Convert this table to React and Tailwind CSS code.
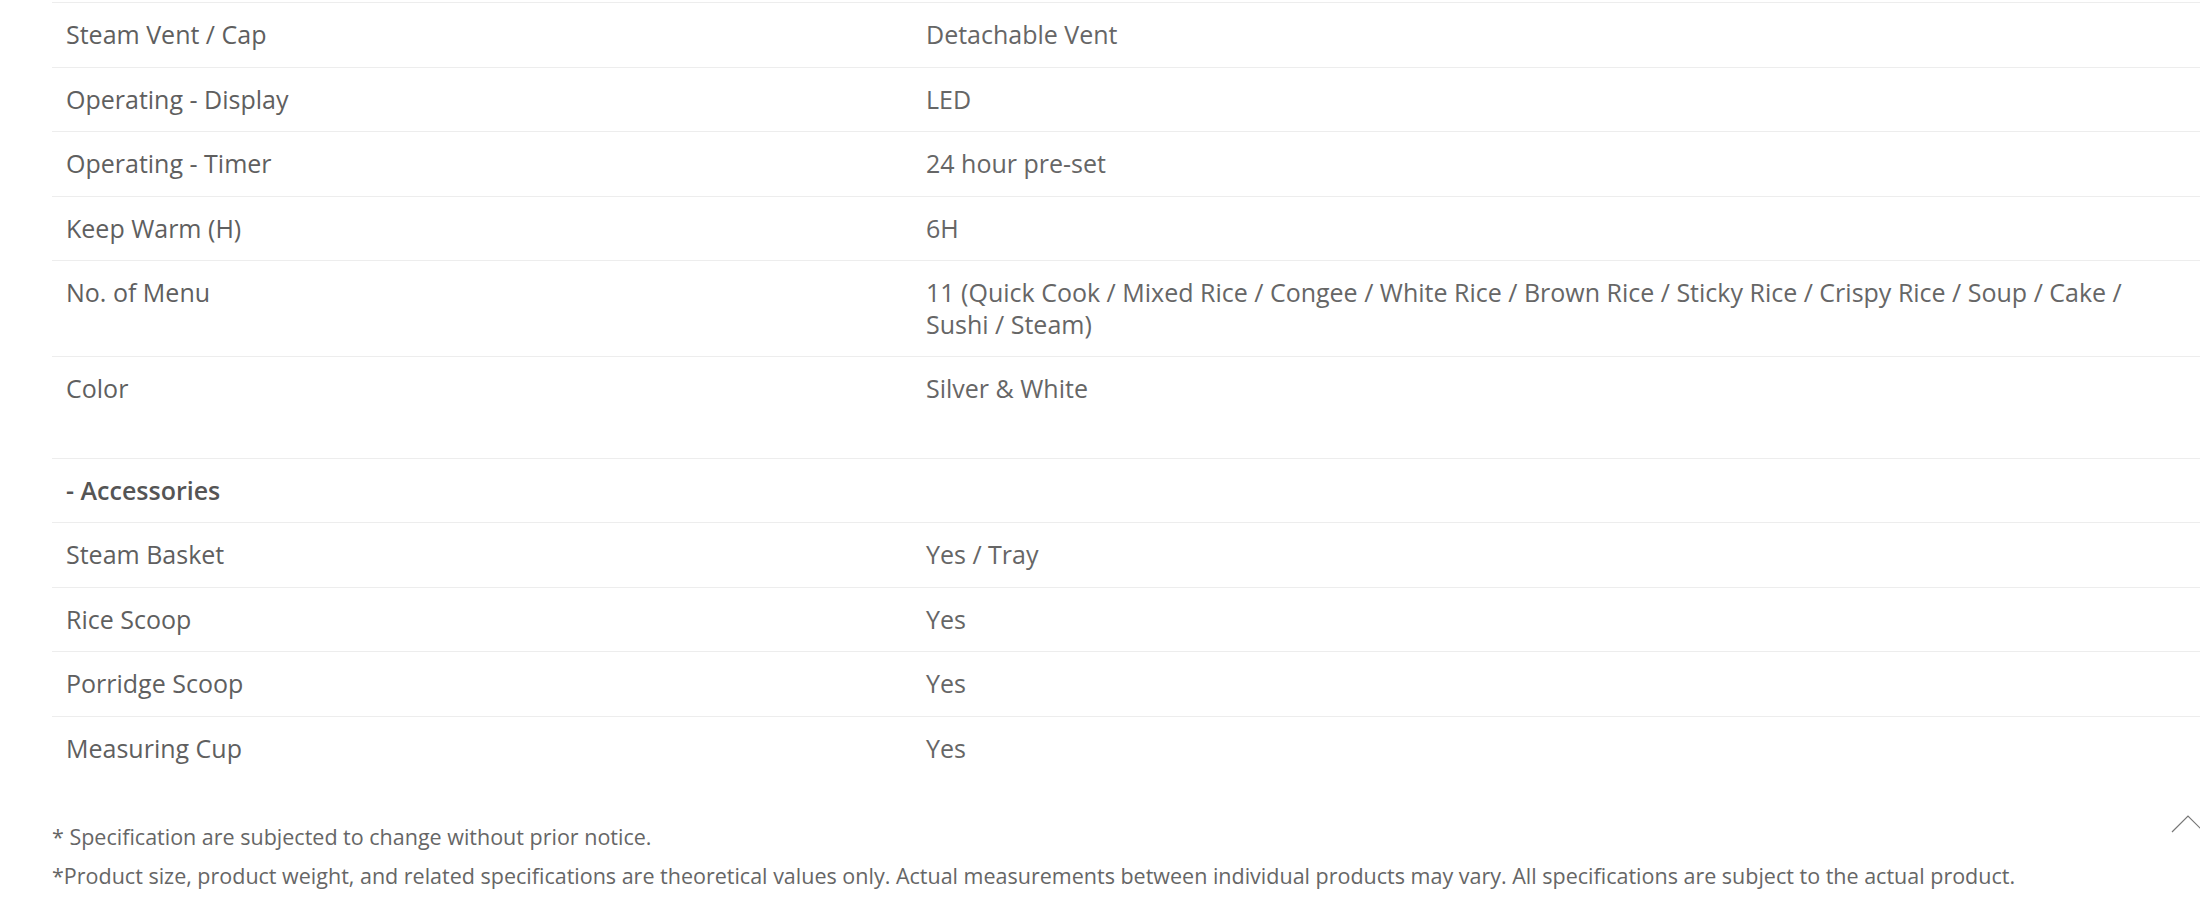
const specs = [
  { label: 'Steam Vent / Cap', value: 'Detachable Vent' },
  { label: 'Operating - Display', value: 'LED' },
  { label: 'Operating - Timer', value: '24 hour pre-set' },
  { label: 'Keep Warm (H)', value: '6H' },
  {
    label: 'No. of Menu',
    value: [
      '11 (Quick Cook / Mixed Rice / Congee / White Rice / Brown Rice / Sticky Rice / Crispy Rice / Soup / Cake /',
      'Sushi / Steam)',
    ],
  },
  { label: 'Color', value: 'Silver & White', spacer: true },
]

const accessories = [
  { label: 'Steam Basket', value: 'Yes / Tray' },
  { label: 'Rice Scoop', value: 'Yes' },
  { label: 'Porridge Scoop', value: 'Yes' },
  { label: 'Measuring Cup', value: 'Yes' },
]

function SpecRow({ label, value, spacer }) {
  return (
    <div className={`flex border-t border-[#ededed] pt-4 ${spacer ? 'pb-[53px]' : 'pb-4'}`}>
      <div className="w-[860px] shrink-0 pl-[14px] text-[#5f5f5f]">{label}</div>
      <div className="flex-1 pl-[14px] text-[#666]">
        {Array.isArray(value)
          ? value.map((line) => (
              <div key={line} className="whitespace-nowrap">
                {line}
              </div>
            ))
          : value}
      </div>
    </div>
  )
}

export default function App() {
  return (
    <div className="relative h-[918px] w-[2200px] overflow-hidden bg-white font-['Open_Sans',sans-serif]">
      <div className="pl-[52px] pt-[2px] text-[25px] leading-[31.5px]">
        {specs.map((row) => (
          <SpecRow key={row.label} {...row} />
        ))}
        <div className="flex border-t border-[#ededed] py-4">
          <div className="pl-[14px] font-semibold text-[#555]">- Accessories</div>
        </div>
        {accessories.map((row) => (
          <SpecRow key={row.label} {...row} />
        ))}
      </div>

      <div className="mt-[37px] pl-[52px] text-[21.5px] leading-[39px] text-[#666]">
        <p className="whitespace-nowrap">* Specification are subjected to change without prior notice.</p>
        <p className="whitespace-nowrap">
          *Product size, product weight, and related specifications are theoretical values only. Actual
          measurements between individual products may vary. All specifications are subject to the actual product.
        </p>
      </div>

      <button className="absolute left-[2168px] top-[810px] h-[30px] w-[40px]">
        <svg width="40" height="30" viewBox="0 0 40 30" fill="none">
          <path d="M4 22 L20 6 L36 22" stroke="#777" strokeWidth="1.2" />
        </svg>
      </button>
    </div>
  )
}
